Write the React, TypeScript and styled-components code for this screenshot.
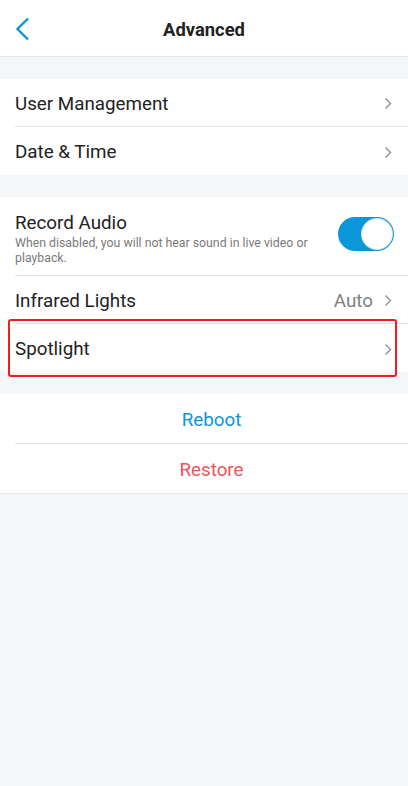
import styled, { createGlobalStyle } from "styled-components";

interface RowProps {
  $tall?: boolean;
}

interface ActionProps {
  $tone: "blue" | "red";
}

const GlobalStyle = createGlobalStyle`
  html, body {
    margin: 0;
    padding: 0;
    background: #f5f6f8;
  }
  body {
    font-family: Roboto, "Noto Sans", Arial, sans-serif;
    color: #222;
  }
`;

const Chevron = () => (
  <svg width="8" height="13" viewBox="0 0 8 13" fill="none">
    <path d="M1.5 1.5 L6.5 6.5 L1.5 11.5" stroke="#8e8e99" strokeWidth="1.4" />
  </svg>
);

const BackIcon = () => (
  <svg width="16" height="24" viewBox="0 0 16 24" fill="none">
    <path d="M13 1.5 L2.5 12 L13 22.5" stroke="#0a96d9" strokeWidth="2.4" />
  </svg>
);

const App = () => {
  return (
    <>
      <GlobalStyle />
      <Page>
        <Header>
          <BackButton>
            <BackIcon />
          </BackButton>
          <Title>Advanced</Title>
        </Header>

        <Group>
          <Row>
            <Label>User Management</Label>
            <Chevron />
          </Row>
          <Row>
            <Label>Date &amp; Time</Label>
            <Chevron />
          </Row>
        </Group>

        <Group>
          <Row $tall>
            <TextBlock>
              <Label>Record Audio</Label>
              <Hint>When disabled, you will not hear sound in live video or playback.</Hint>
            </TextBlock>
            <Toggle>
              <Knob />
            </Toggle>
          </Row>
          <Row>
            <Label>Infrared Lights</Label>
            <Trail>
              <Value>Auto</Value>
              <Chevron />
            </Trail>
          </Row>
          <Highlighted>
            <Row>
              <Label>Spotlight</Label>
              <Chevron />
            </Row>
            <Marker />
          </Highlighted>
        </Group>

        <Group $last>
          <ActionRow>
            <ActionText $tone="blue">Reboot</ActionText>
          </ActionRow>
          <ActionRow>
            <ActionText $tone="red">Restore</ActionText>
          </ActionRow>
        </Group>
      </Page>
    </>
  );
};

export default App;

const Page = styled.div`
  width: 408px;
  min-height: 786px;
  background: #f5f6f8;
`;

const Header = styled.header`
  position: relative;
  height: 57px;
  padding-top: 3px;
  box-sizing: border-box;
  background: #fff;
  border-bottom: 1px solid #e6e7ea;
  display: flex;
  align-items: center;
  justify-content: center;
`;

const BackButton = styled.div`
  position: absolute;
  left: 15px;
  top: 17px;
  display: flex;
`;

const Title = styled.h1`
  margin: 0;
  font-size: 18.4px;
  font-weight: 700;
  color: #222;
`;

const Group = styled.section<{ $last?: boolean }>`
  margin-top: 22px;
  background: #fff;
  padding-left: 15px;
  border-bottom: ${(p) => (p.$last ? "1px solid #e4e4e6" : "none")};

  & > *:not(:last-child) {
    border-bottom: 1px solid #e2e2e4;
  }
`;

const Row = styled.div<RowProps>`
  box-sizing: border-box;
  height: ${(p) => (p.$tall ? "79px" : "48px")};
  padding: 2px 16px 0 0;
  display: flex;
  align-items: center;
  justify-content: space-between;
`;

const TextBlock = styled.div`
  display: flex;
  flex-direction: column;
  max-width: 305px;
  padding-top: 4px;
`;

const Label = styled.span`
  font-size: 18.8px;
  color: #222;
`;

const Hint = styled.span`
  margin-top: 2px;
  font-size: 12.3px;
  line-height: 15px;
  color: #7a7a7a;
`;

const Trail = styled.div`
  display: flex;
  align-items: center;
  gap: 11px;
`;

const Value = styled.span`
  font-size: 18.8px;
  color: #808080;
`;

const Toggle = styled.div`
  width: 56px;
  height: 34px;
  border-radius: 17px;
  background: #0a96d9;
  display: flex;
  align-items: center;
  justify-content: flex-end;
  padding: 0 2px;
  box-sizing: border-box;
  margin: -6px -2px 0 0;
`;

const Knob = styled.div`
  width: 30px;
  height: 30px;
  border-radius: 50%;
  background: #fff;
  box-shadow: 0 0 0 1px #d8e6ee;
`;

const Highlighted = styled.div`
  position: relative;
`;

const Marker = styled.div`
  position: absolute;
  left: -7px;
  right: 11px;
  top: -5px;
  bottom: -5px;
  border: 2.5px solid #f21c1c;
  border-radius: 3px;
  pointer-events: none;
`;

const ActionRow = styled.div`
  box-sizing: border-box;
  height: 50px;
  padding-top: 2px;
  display: flex;
  align-items: center;
  justify-content: center;

  &:last-child {
    height: 49px;
  }
`;

const ActionText = styled.span<ActionProps>`
  font-size: 18.8px;
  color: ${(p) => (p.$tone === "blue" ? "#0a96d9" : "#f0535b")};
`;
